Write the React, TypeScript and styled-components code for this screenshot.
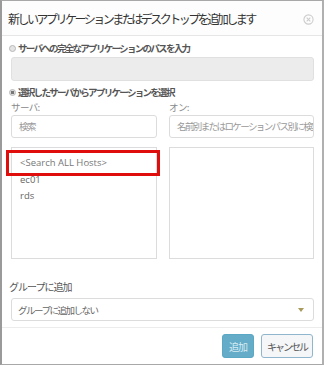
import styled, { createGlobalStyle } from "styled-components";

const GlobalStyle = createGlobalStyle`
	body {
		margin: 0;
		background: #fff;
		font-family: "Open Sans", "Noto Sans CJK JP", sans-serif;
	}
`;

export default function App() {
	return (
		<>
			<GlobalStyle />
			<StyledDialog>
				<StyledHeader>
					<StyledTitle>新しいアプリケーションまたはデスクトップを追加します</StyledTitle>
					<StyledClose aria-label="close">
						<svg width="11" height="11" viewBox="0 0 12 12">
							<circle cx="6" cy="6" r="5" fill="none" stroke="#cdcdcd" strokeWidth="1.2" />
							<path d="M4 4 L8 8 M8 4 L4 8" stroke="#cdcdcd" strokeWidth="1.2" />
						</svg>
					</StyledClose>
				</StyledHeader>
				<StyledBody>
					<StyledRadioRow>
						<StyledRadio />
						サーバへの完全なアプリケーションのパスを入力
					</StyledRadioRow>
					<StyledDisabledInput />
					<StyledRadioRow>
						<StyledRadio $checked />
						選択したサーバからアプリケーションを選択
					</StyledRadioRow>
					<StyledColumns>
						<StyledColumn>
							<StyledLabel>サーバ:</StyledLabel>
							<StyledInput>検索</StyledInput>
							<StyledListBox>
								<StyledItem $muted>&lt;Search ALL Hosts&gt;</StyledItem>
								<StyledItem>ec01</StyledItem>
								<StyledItem>rds</StyledItem>
								<StyledHighlight />
							</StyledListBox>
						</StyledColumn>
						<StyledColumn>
							<StyledLabel>オン:</StyledLabel>
							<StyledInput>名前別またはロケーションパス別に検索</StyledInput>
							<StyledListBox />
						</StyledColumn>
					</StyledColumns>
					<StyledGroupLabel>グループに追加</StyledGroupLabel>
					<StyledSelect>
						<span>グループに追加しない</span>
						<StyledCaret />
					</StyledSelect>
				</StyledBody>
				<StyledFooter>
					<StyledButton $primary>追加</StyledButton>
					<StyledButton>キャンセル</StyledButton>
				</StyledFooter>
			</StyledDialog>
		</>
	);
}

const jp = `"Noto Sans CJK JP", sans-serif`;

const StyledDialog = styled.div`
	width: 324px;
	height: 365px;
	box-sizing: border-box;
	border: 1px solid #a8a8a8;
	border-left: 2px solid #9a9a9a;
	border-right: 2px solid #b0b0b0;
	background: #fff;
	display: flex;
	flex-direction: column;
`;
const StyledHeader = styled.div`
	height: 36px;
	display: flex;
	align-items: center;
	justify-content: space-between;
	padding: 0 8px 0 6px;
	border-bottom: 1px solid #e6e6e6;
	background: #fdfdfd;
`;
const StyledTitle = styled.h1`
	margin: 0;
	font: 400 12px ${jp};
	letter-spacing: -2.5px;
	color: #333;
	white-space: nowrap;
`;
const StyledClose = styled.span`
	display: flex;
	margin-top: 3px;
`;
const StyledBody = styled.div`
	padding: 4px 8px 0 7px;
	display: flex;
	flex-direction: column;
	flex: 1;
`;
const StyledRadioRow = styled.div`
	display: flex;
	align-items: center;
	gap: 2px;
	height: 16px;
	font: 700 9.5px ${jp};
	letter-spacing: -1.7px;
	color: #555;
	white-space: nowrap;
`;
const StyledRadio = styled.span<{ $checked?: boolean }>`
	width: 5px;
	height: 5px;
	border-radius: 50%;
	border: 1px solid #b8b8b8;
	background: ${(p) => (p.$checked ? "radial-gradient(circle, #777 45%, #ddd 55%)" : "#e4e4e4")};
`;
const StyledDisabledInput = styled.div`
	height: 22px;
	margin: 1px 0 3px 2px;
	border: 1px solid #e0e0e0;
	border-radius: 3px;
	background: #ececec;
`;
const StyledColumns = styled.div`
	display: grid;
	grid-template-columns: 146px 145px;
	justify-content: space-between;
	padding-left: 2px;
`;
const StyledColumn = styled.div`
	display: flex;
	flex-direction: column;
	min-width: 0;
`;
const StyledLabel = styled.label`
	font: 400 9.5px ${jp};
	letter-spacing: -0.6px;
	color: #888;
	height: 15px;
	line-height: 15px;
`;
const StyledInput = styled.div`
	height: 23px;
	box-sizing: border-box;
	padding: 0 7px;
	border: 1px solid #dcdcdc;
	border-radius: 3px;
	font: 400 9.5px/21px ${jp};
	letter-spacing: -1.6px;
	color: #999;
	white-space: nowrap;
	overflow: hidden;
`;
const StyledListBox = styled.div`
	position: relative;
	height: 112px;
	box-sizing: border-box;
	margin-top: 9px;
	padding: 7px 0 0 8px;
	border: 1px solid #dcdcdc;
`;
const StyledHighlight = styled.div`
	position: absolute;
	left: -6px;
	top: 2px;
	width: 154px;
	height: 26px;
	box-sizing: border-box;
	border: 3px solid #e00d0d;
`;
const StyledItem = styled.div<{ $muted?: boolean }>`
	font: 400 9.5px/16.5px "Open Sans", sans-serif;
	color: ${(p) => (p.$muted ? "#777" : "#666")};
`;
const StyledGroupLabel = styled.div`
	margin-top: 21px;
	font: 400 10px ${jp};
	letter-spacing: -1px;
	color: #555;
	height: 14px;
	line-height: 14px;
`;
const StyledSelect = styled.div`
	margin: 4px 0 0 2px;
	height: 23px;
	box-sizing: border-box;
	border: 1px solid #dcdcdc;
	border-radius: 3px;
	padding: 0 9px 0 6px;
	display: flex;
	align-items: center;
	justify-content: space-between;
	font: 400 9.5px ${jp};
	letter-spacing: -1.5px;
	color: #666;
`;
const StyledCaret = styled.span`
	width: 0;
	height: 0;
	border-left: 3px solid transparent;
	border-right: 3px solid transparent;
	border-top: 4px solid #a89a5a;
`;
const StyledFooter = styled.div`
	border-top: 1px solid #ececec;
	height: 38px;
	display: flex;
	justify-content: flex-end;
	align-items: center;
	gap: 7px;
	padding: 0 9px 0 0;
	margin-top: 6px;
`;
const StyledButton = styled.button<{ $primary?: boolean }>`
	height: 24px;
	box-sizing: border-box;
	padding: 0 5px;
	border-radius: 3px;
	border: 1px solid ${(p) => (p.$primary ? "#5aa8c4" : "#8fb6cc")};
	background: ${(p) => (p.$primary ? "#64acc8" : "#f4f6f8")};
	color: ${(p) => (p.$primary ? "#d8ecf4" : "#555")};
	font: 400 10px ${jp};
	letter-spacing: ${(p) => (p.$primary ? "-1px" : "-2px")};
	min-width: ${(p) => (p.$primary ? "32px" : "52px")};
`;
